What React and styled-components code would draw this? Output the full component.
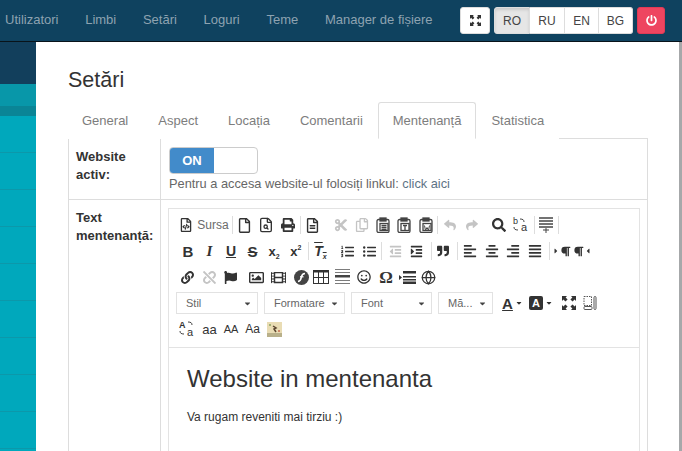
import React from 'react';
import styled, { createGlobalStyle } from 'styled-components';
import {
  FaRegFileCode, FaRegFile, FaPrint, FaRegFileAlt, FaCut, FaRegCopy, FaReply, FaShare,
  FaSearch, FaListOl, FaListUl, FaOutdent, FaIndent, FaQuoteRight, FaAlignLeft, FaAlignCenter,
  FaAlignRight, FaAlignJustify, FaParagraph, FaLink, FaUnlink, FaFlag, FaRegImage, FaFilm, FaRegSmile,
  FaPowerOff, FaCaretDown, FaCaretRight, FaCaretLeft,
} from 'react-icons/fa';
import { Globe, FileSearch } from 'lucide-react';

const GlobalStyle = createGlobalStyle`
  html, body {
    margin: 0;
    padding: 0;
    height: 451px;
    overflow: hidden;
    background: #fff;
    font-family: "Liberation Sans", Arial, sans-serif;
  }
`;

const Page = styled.div`
  width: 682px;
  height: 451px;
  overflow: hidden;
  display: flex;
  flex-direction: column;
`;

const Navbar = styled.header`
  height: 41px;
  flex: none;
  background: #0f425f;
  border-bottom: 1px solid #08131a;
  display: flex;
  align-items: center;
  padding-left: 5px;
`;

const NavLink = styled.a`
  font-size: 13px;
  color: #8ea3b1;
  margin-right: 26.7px;
  white-space: nowrap;
  position: relative;
  top: -1px;
`;

const NavActions = styled.div`
  margin-left: auto;
  margin-right: 17px;
  display: flex;
  gap: 4px;
`;

const NavButton = styled.button`
  height: 27px;
  width: ${({ $w }) => $w || 36}px;
  padding: 0;
  border: 1px solid #ddd;
  border-left-width: ${({ $joined }) => ($joined ? 0 : 1)}px;
  background: ${({ $active }) => ($active ? '#e6e6e6' : '#fff')};
  box-shadow: ${({ $active }) => ($active ? 'inset 0 2px 3px rgba(0,0,0,.12)' : 'none')};
  color: #444;
  font: 12px "Liberation Sans", Arial, sans-serif;
  display: flex;
  align-items: center;
  justify-content: center;
  border-radius: 3px;
`;

const LangGroup = styled.div`
  display: flex;
  ${NavButton} { border-radius: 0; }
  ${NavButton}:first-child { border-radius: 3px 0 0 3px; }
  ${NavButton}:last-child { border-radius: 0 3px 3px 0; }
`;

const PowerButton = styled(NavButton)`
  background: #ee4560;
  border-color: #e03a55;
  color: #fff;
`;

const Body = styled.div`
  flex: 1;
  display: flex;
  min-height: 0;
`;

const Sidebar = styled.aside`
  width: 36px;
  flex: none;
  display: flex;
  flex-direction: column;
  background: #00a8bc;
`;

const SideTop = styled.div`
  height: 42px;
  flex: none;
  background: #123f5c;
`;

const SideBand = styled.div`
  height: 22px;
  flex: none;
  background: #0897a9;
`;

const SideBandDark = styled.div`
  height: 10px;
  flex: none;
  background: #0a8596;
`;

const SideItem = styled.div`
  height: 37px;
  flex: none;
  box-sizing: border-box;
  border-bottom: 1px solid #0c98aa;
`;

const Main = styled.main`
  flex: 1;
  padding: 0 31px 0 32px;
  min-width: 0;
`;

const ScrollEdge = styled.div`
  width: 3px;
  flex: none;
  background: #a6a8aa;
`;

const Title = styled.h1`
  margin: 0;
  padding-top: 25px;
  font-size: 21.5px;
  line-height: 26px;
  font-weight: 400;
  color: #333;
`;

const Tabs = styled.nav`
  display: flex;
  margin-top: 9px;
  height: 37px;
  box-sizing: border-box;
  border-bottom: 1px solid #ddd;
`;

const Tab = styled.a`
  height: 37px;
  box-sizing: border-box;
  padding: 0 14px;
  font-size: 13px;
  line-height: 36px;
  color: #7d7d7d;
  background: #fff;
  border: 1px solid ${({ $active }) => ($active ? '#ddd' : 'transparent')};
  border-bottom-color: ${({ $active }) => ($active ? '#fff' : 'transparent')};
  border-radius: 3px 3px 0 0;
  &:first-child { margin-left: -1px; }
`;

const SettingsTable = styled.div`
  display: grid;
  grid-template-columns: 92px 1fr;
  border-left: 1px solid #ddd;
  border-right: 1px solid #ddd;
`;

const LabelCell = styled.div`
  border-right: 1px solid #ddd;
  border-bottom: 1px solid #ddd;
  padding: 9px 0 0 7px;
  font-size: 13px;
  line-height: 17.5px;
  font-weight: 700;
  color: #333;
`;

const ValueCell = styled.div`
  border-bottom: 1px solid #ddd;
  padding: 8px 8px 0;
  height: ${({ $h }) => ($h ? `${$h}px` : 'auto')};
  box-sizing: border-box;
`;

const Switch = styled.div`
  width: 89px;
  height: 27px;
  box-sizing: border-box;
  border: 1px solid #ccc;
  border-radius: 4px;
  overflow: hidden;
  display: flex;
`;

const SwitchOn = styled.div`
  width: 44px;
  background: #428bca;
  color: #fff;
  font-size: 13px;
  font-weight: 700;
  line-height: 25px;
  text-align: center;
`;

const Hint = styled.p`
  margin: 1px 0 0;
  font-size: 12.8px;
  line-height: 18px;
  color: #666;
`;

const HintLink = styled.a`
  color: #5d7385;
`;

const Editor = styled.div`
  margin: 0 0 0 -1px;
  width: 472px;
  border: 1px solid #e3e3e3;
  box-sizing: border-box;
  height: 300px;
`;

const Toolbar = styled.div`
  padding: 3px 0 5px 8px;
  border-bottom: 1px solid #e3e3e3;
`;

const ToolRow = styled.div`
  display: flex;
  align-items: center;
  height: 26px;
  color: #333;
  margin-left: ${({ $shift }) => $shift || 0}px;
`;

const ToolBtn = styled.span`
  width: ${({ $w }) => $w || 21.6}px;
  height: 22px;
  flex: none;
  display: flex;
  align-items: center;
  justify-content: center;
  gap: ${({ $gap }) => $gap || 0}px;
  color: ${({ $muted }) => ($muted ? '#c4c4c4' : '#333')};
  font-size: 13px;
  position: relative;
`;

const ToolText = styled.span`
  color: #6b6b6b;
  font-size: 12px;
  margin-left: 4px;
`;

const Glyph = styled.span`
  font-family: ${({ $serif }) => ($serif ? '"Liberation Serif", serif' : '"Liberation Sans", Arial, sans-serif')};
  font-size: ${({ $s }) => $s || 14}px;
  font-weight: ${({ $b }) => ($b ? 700 : 400)};
  font-style: ${({ $i }) => ($i ? 'italic' : 'normal')};
  text-decoration: ${({ $deco }) => $deco || 'none'};
  color: #333;
  line-height: 1;
`;

const BackColorGlyph = styled.span`
  width: 14px;
  height: 14px;
  background: #333;
  border-radius: 2px;
  color: #fff;
  font-size: 11px;
  font-weight: 700;
  line-height: 14px;
  text-align: center;
`;

const Tiny = styled.sub`
  font-size: 7px;
  font-weight: 700;
  line-height: 0;
  vertical-align: ${({ $up }) => ($up ? '6px' : '-3px')};
`;

const Sep = styled.span`
  width: 1px;
  height: 18px;
  flex: none;
  margin: 0 1px;
  background: #ddd;
`;

const Space = styled.span`
  width: ${({ $w }) => $w}px;
  flex: none;
`;

const Combo = styled.div`
  width: ${({ $w }) => $w}px;
  height: 22px;
  flex: none;
  box-sizing: border-box;
  margin-right: 6px;
  border: 1px solid #e2e2e2;
  padding: 0 5px 0 9px;
  display: flex;
  align-items: center;
  justify-content: space-between;
  font-size: 11px;
  color: #666;
  svg { font-size: 9px; color: #444; }
`;

const Content = styled.div`
  padding: 16px 18px 0;
`;

const Heading = styled.h2`
  margin: 0;
  font-size: 24px;
  line-height: 30px;
  font-weight: 400;
  color: #333;
`;

const Para = styled.p`
  margin: 14px 0 0;
  font-size: 12px;
  line-height: 18px;
  color: #333;
`;

const MaximizeIcon = ({ size = 14, color = '#333' }) => (
  <svg width={size} height={size} viewBox="0 0 14 14" fill={color}>
    <path d="M0 0h5L3.6 1.4 5.6 3.4 3.4 5.6 1.4 3.6 0 5zM14 0v5l-1.4-1.4-2 2-2.2-2.2 2-2L9 0zM0 14V9l1.4 1.4 2-2 2.2 2.2-2 2L5 14zM14 14H9l1.4-1.4-2-2 2.2-2.2 2 2L14 9z" />
  </svg>
);

const PasteIcon = ({ mark }) => (
  <svg width="14" height="16" viewBox="0 0 14 16" fill="none" stroke="#444" strokeWidth="1.3">
    <rect x="1" y="2.5" width="12" height="13" rx="1.5" />
    <rect x="4" y="1" width="6" height="3" fill="#444" />
    <rect x="4" y="6.5" width="8" height="7" fill="#fff" />
    {mark === 'plain' && <path d="M5.5 8.5h5M5.5 10.5h5M5.5 12.5h5" />}
    {mark === 'text' && <path d="M6 8.5h4M8 8.5v5" />}
    {mark === 'word' && <path d="M5.5 8.5l1 5 1.5-3 1.5 3 1-5" strokeWidth="1" />}
  </svg>
);

const ReplaceIcon = () => (
  <svg width="18" height="18" viewBox="0 0 18 18" fill="none" stroke="#444" strokeWidth="1" overflow="visible">
    <text x="1" y="8" fontSize="9" fontFamily="Liberation Sans" fill="#333" stroke="none">b</text>
    <text x="9" y="15" fontSize="11" fontFamily="Liberation Sans" fill="#333" stroke="none">a</text>
    <path d="M8 3c3 0 4 1 4 3M2 11c0 2 1 3 4 3" />
  </svg>
);

const SelectBlockIcon = () => (
  <svg width="14" height="16" viewBox="0 0 14 16" fill="#444">
    <path d="M0 0h14v2H0zM0 3h14v2H0zM0 6h14v2H0zM0 9h14v2H0z" opacity=".75" />
    <path d="M4 12.5h6v1H4zM6.5 11h1v5h-1z" />
  </svg>
);

const FlashIcon = () => (
  <svg width="15" height="15" viewBox="0 0 15 15">
    <circle cx="7.5" cy="7.5" r="7.5" fill="#444" />
    <path d="M11 3.5c-3 0-3.2 1.6-3.6 3.6C7 9.4 6.5 11 4 11.5" stroke="#fff" strokeWidth="1.5" fill="none" />
    <path d="M6 6.8h3.5" stroke="#fff" strokeWidth="1.3" />
  </svg>
);

const TableIcon = () => (
  <svg width="16" height="14" viewBox="0 0 16 14" fill="none" stroke="#333">
    <rect x=".5" y=".5" width="15" height="13" />
    <path d="M0 1.5h16" strokeWidth="2" />
    <path d="M5.5 1v13M10.5 1v13M0 7.5h16" />
  </svg>
);

const RuleIcon = () => (
  <svg width="15" height="16" viewBox="0 0 15 16" fill="#444">
    <path d="M0 0h15v1H0zM0 3h15v1H0z" opacity=".7" />
    <path d="M0 6h15v2.5H0z" />
    <path d="M0 11h15v1H0zM0 14h15v1H0z" opacity=".7" />
  </svg>
);

const BreakIcon = () => (
  <svg width="17" height="13" viewBox="0 0 17 13" fill="#333">
    <path d="M0 4l3 2.5L0 9zM4 0h13v2.5H4zM4 5h13v1.5H4zM4 8h13v1.5H4zM4 10.5h13V13H4z" />
  </svg>
);

const ShowBlocksIcon = () => (
  <svg width="14" height="16" viewBox="0 0 14 16" fill="none" stroke="#555">
    <path d="M1 1.5h7.5v9H1z" strokeDasharray="1.5 1" />
    <rect x="1" y="11.5" width="8" height="3" rx="1" />
    <rect x="11" y="1.5" width="2" height="13" rx="1" />
  </svg>
);

const StickerIcon = () => (
  <svg width="15" height="15" viewBox="0 0 15 15">
    <rect width="15" height="15" fill="#e9dcb4" />
    <rect y="11" width="15" height="4" fill="#b9b08a" />
    <path d="M6 4l3 2-2 1 2 3" stroke="#5b4630" strokeWidth="1.5" fill="none" />
    <circle cx="3" cy="3" r="1" fill="#88a35f" />
    <circle cx="12" cy="9" r="1" fill="#c46a4d" />
  </svg>
);

const CaseIcon = () => (
  <svg width="17" height="18" viewBox="0 0 17 18" fill="none" stroke="#444" strokeWidth="1" overflow="visible">
    <text x="0" y="8" fontSize="9" fontWeight="700" fontFamily="Liberation Sans" fill="#333" stroke="none">A</text>
    <text x="8" y="16" fontSize="11" fontFamily="Liberation Sans" fill="#333" stroke="none">a</text>
    <path d="M9 2c3 0 4 1 4 3M1 11c0 2 1 3 4 3" />
  </svg>
);

const B = (props) => <ToolBtn {...props} />;

const App = () => {
  return (
    <Page>
      <GlobalStyle />
      <Navbar>
        {['Utilizatori', 'Limbi', 'Setări', 'Loguri', 'Teme', 'Manager de fișiere'].map((item) => (
          <NavLink key={item}>{item}</NavLink>
        ))}
        <NavActions>
          <NavButton $w={30}><MaximizeIcon size={11} /></NavButton>
          <LangGroup>
            <NavButton $w={36} $active>RO</NavButton>
            <NavButton $w={35} $joined>RU</NavButton>
            <NavButton $w={34} $joined>EN</NavButton>
            <NavButton $w={34} $joined>BG</NavButton>
          </LangGroup>
          <PowerButton $w={28}><FaPowerOff size={11} /></PowerButton>
        </NavActions>
      </Navbar>
      <Body>
        <Sidebar>
          <SideTop />
          <SideBand />
          <SideBandDark />
          {Array.from({ length: 10 }, (_, i) => <SideItem key={i} />)}
        </Sidebar>
        <Main>
          <Title>Setări</Title>
          <Tabs>
            <Tab>General</Tab>
            <Tab>Aspect</Tab>
            <Tab>Locația</Tab>
            <Tab>Comentarii</Tab>
            <Tab $active>Mentenanță</Tab>
            <Tab>Statistica</Tab>
          </Tabs>
          <SettingsTable>
            <LabelCell>Website activ:</LabelCell>
            <ValueCell $h={61}>
              <Switch><SwitchOn>ON</SwitchOn></Switch>
              <Hint>Pentru a accesa website-ul folosiți linkul: <HintLink>click aici</HintLink></Hint>
            </ValueCell>
            <LabelCell>Text mentenanță:</LabelCell>
            <ValueCell>
              <Editor>
                <Toolbar>
                  <ToolRow>
                    <B $w={54}><FaRegFileCode size={14} /><ToolText>Sursa</ToolText></B>
                    <Sep />
                    <B><FaRegFile size={15} /></B>
                    <B><FileSearch size={16} /></B>
                    <B><FaPrint size={14} /></B>
                    <Sep />
                    <B><FaRegFileAlt size={15} /></B>
                    <Space $w={7} />
                    <B $muted><FaCut size={14} /></B>
                    <B $muted $w={20}><FaRegCopy size={14} /></B>
                    <B><PasteIcon mark="plain" /></B>
                    <B><PasteIcon mark="text" /></B>
                    <B $w={21}><PasteIcon mark="word" /></B>
                    <Sep />
                    <B $muted><FaReply size={12} /></B>
                    <B $muted><FaShare size={12} /></B>
                    <Space $w={6} />
                    <B><FaSearch size={14} /></B>
                    <B><ReplaceIcon /></B>
                    <Space $w={1} />
                    <Sep />
                    <B><SelectBlockIcon /></B>
                    <Sep />
                  </ToolRow>
                  <ToolRow>
                    <B><Glyph $b $s={15}>B</Glyph></B>
                    <B><Glyph $b $i $serif $s={15}>I</Glyph></B>
                    <B><Glyph $b $deco="underline" $s={14}>U</Glyph></B>
                    <B><Glyph $b $deco="line-through" $s={15}>S</Glyph></B>
                    <B><Glyph $b $s={13}>x<Tiny>2</Tiny></Glyph></B>
                    <B><Glyph $b $s={13}>x<Tiny $up>2</Tiny></Glyph></B>
                    <Sep />
                    <B><Glyph $b $i $deco="overline" $s={14}>T<Tiny>x</Tiny></Glyph></B>
                    <Space $w={6} />
                    <B><FaListOl size={13} /></B>
                    <B><FaListUl size={13} /></B>
                    <Sep />
                    <Space $w={1} />
                    <B $muted><FaOutdent size={13} /></B>
                    <B><FaIndent size={13} /></B>
                    <Space $w={2} />
                    <Sep />
                    <B><FaQuoteRight size={12} /></B>
                    <Space $w={2} />
                    <Sep />
                    <B><FaAlignLeft size={14} /></B>
                    <B><FaAlignCenter size={14} /></B>
                    <B><FaAlignRight size={14} /></B>
                    <B><FaAlignJustify size={14} /></B>
                    <Space $w={2} />
                    <Sep />
                    <B><FaCaretRight size={8} /><FaParagraph size={11} /></B>
                    <B><FaParagraph size={11} /><FaCaretLeft size={8} /></B>
                  </ToolRow>
                  <ToolRow>
                    <B><FaLink size={13} /></B>
                    <B $muted><FaUnlink size={13} /></B>
                    <B><FaFlag size={13} /></B>
                    <Space $w={4} />
                    <B><FaRegImage size={15} /></B>
                    <B><FaFilm size={15} /></B>
                    <Space $w={4} />
                    <B $w={18}><FlashIcon /></B>
                    <B $w={21}><TableIcon /></B>
                    <B><RuleIcon /></B>
                    <B><FaRegSmile size={14} /></B>
                    <B><Glyph $serif $b $s={17}>Ω</Glyph></B>
                    <B><BreakIcon /></B>
                    <B $w={21}><Globe size={15} /></B>
                  </ToolRow>
                  <ToolRow $shift={-1}>
                    <Combo $w={82}>Stil<FaCaretDown /></Combo>
                    <Combo $w={81}>Formatare<FaCaretDown /></Combo>
                    <Combo $w={81}>Font<FaCaretDown /></Combo>
                    <Combo $w={55}>Mă...<FaCaretDown /></Combo>
                    <B $w={27} $gap={2}><Glyph $b $deco="underline" $s={15}>A</Glyph><FaCaretDown size={8} /></B>
                    <B $w={30} $gap={2}><BackColorGlyph>A</BackColorGlyph><FaCaretDown size={8} /></B>
                    <Space $w={2} />
                    <B><MaximizeIcon /></B>
                    <B><ShowBlocksIcon /></B>
                  </ToolRow>
                  <ToolRow>
                    <B><CaseIcon /></B>
                    <B><Glyph $s={13}>aa</Glyph></B>
                    <B><Glyph $s={11}>AA</Glyph></B>
                    <B><Glyph $s={12}>Aa</Glyph></B>
                    <B><StickerIcon /></B>
                  </ToolRow>
                </Toolbar>
                <Content>
                  <Heading>Website in mentenanta</Heading>
                  <Para>Va rugam reveniti mai tirziu :)</Para>
                </Content>
              </Editor>
            </ValueCell>
          </SettingsTable>
        </Main>
        <ScrollEdge />
      </Body>
    </Page>
  );
};

export default App;
